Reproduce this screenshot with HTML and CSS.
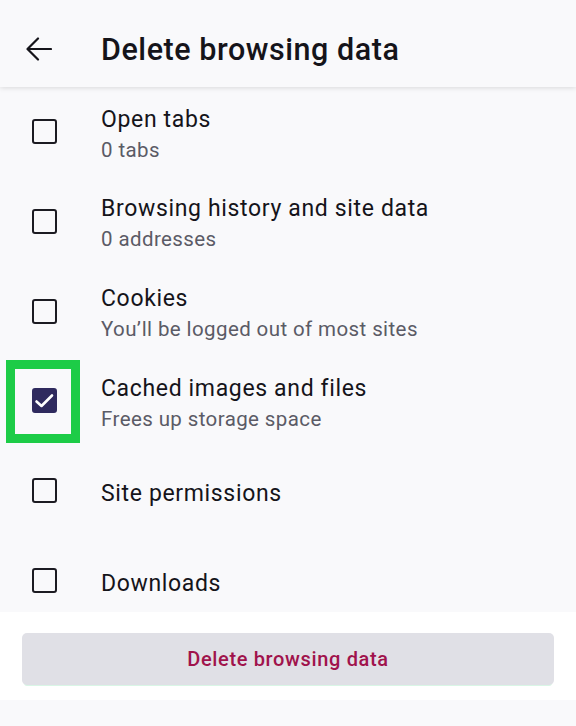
FILE: index.html
```html
<!DOCTYPE html>
<html lang="en">
<head>
<meta charset="utf-8">
<title>Delete browsing data</title>
<link rel="stylesheet" href="styles.css">
</head>
<body>
<div class="screen">
  <header class="appbar">
    <span class="back" aria-label="Back">
      <svg width="26" height="24" viewBox="0 0 26 24"><path d="M25 12H2M12 1.5 1.5 12 12 22.5" fill="none" stroke="#15141a" stroke-width="2.2" stroke-linecap="round" stroke-linejoin="round"/></svg>
    </span>
    <h1 class="title">Delete browsing data</h1>
  </header>
  <main class="list">
    <div class="row">
      <span class="box"></span>
      <div class="text"><div class="label">Open tabs</div><div class="sub">0 tabs</div></div>
    </div>
    <div class="row">
      <span class="box"></span>
      <div class="text"><div class="label">Browsing history and site data</div><div class="sub">0 addresses</div></div>
    </div>
    <div class="row">
      <span class="box"></span>
      <div class="text"><div class="label">Cookies</div><div class="sub">You’ll be logged out of most sites</div></div>
    </div>
    <div class="row">
      <span class="box checked">
        <svg width="21" height="20" viewBox="0 0 21 20"><path d="M2.5 10.5 7.5 15 18 4.5" fill="none" stroke="#fff" stroke-width="2.6" stroke-linecap="round" stroke-linejoin="round"/></svg>
        <span class="highlight"></span>
      </span>
      <div class="text"><div class="label">Cached images and files</div><div class="sub">Frees up storage space</div></div>
    </div>
    <div class="row">
      <span class="box"></span>
      <div class="text"><div class="label">Site permissions</div></div>
    </div>
    <div class="row">
      <span class="box"></span>
      <div class="text"><div class="label">Downloads</div></div>
    </div>
  </main>
  <footer class="footer">
    <button class="delete">Delete browsing data</button>
  </footer>
</div>
</body>
</html>
```
FILE: styles.css
```css
* { box-sizing: border-box; }
html, body { margin: 0; padding: 0; }
body {
  background: #f9f9fb;
  font-family: Roboto, "Noto Sans", "Liberation Sans", sans-serif;
  color: #15141a;
}
.screen {
  width: 576px;
  height: 726px;
  display: flex;
  flex-direction: column;
  overflow: hidden;
}
.appbar {
  height: 87px;
  flex: none;
  display: flex;
  align-items: center;
  padding-top: 12px;
  background: #f9f9fb;
  box-shadow: 0 1px 5px rgba(0,0,0,0.13);
  position: relative;
  z-index: 2;
}
.back {
  width: 26px;
  height: 24px;
  margin-left: 26px;
  margin-top: -1px;
  display: flex;
}
.title {
  margin: 0 0 0 49px;
  font-size: 30.5px;
  font-weight: 500;
  letter-spacing: 0.55px;
  color: #15141a;
}
.list {
  height: 525px;
  flex: none;
  overflow: hidden;
}
.row {
  height: 89.7px;
  display: flex;
  align-items: center;
  padding-left: 32px;
}
.box {
  width: 25px;
  height: 25px;
  flex: none;
  border: 2.6px solid #1c1b22;
  border-radius: 3px;
  position: relative;
  display: flex;
  align-items: center;
  justify-content: center;
}
.box.checked {
  background: #2f2a5e;
  border-color: #2f2a5e;
}
.highlight {
  position: absolute;
  left: -28px;
  top: -30px;
  width: 74px;
  height: 83px;
  border: 9.5px solid #1dcc47;
}
.text {
  margin-left: 44px;
  padding-top: 7px;
  display: flex;
  flex-direction: column;
}
.label {
  font-size: 23px;
  line-height: 30px;
  letter-spacing: 0.65px;
  color: #15141a;
}
.sub {
  font-size: 20.5px;
  line-height: 31.5px;
  letter-spacing: 0.4px;
  color: #5b5b66;
}
.footer {
  flex: none;
  background: #fff;
  padding: 21px 22px 15px 22px;
}
.delete {
  display: block;
  width: 532px;
  height: 52px;
  border: none;
  border-radius: 5px;
  background: #e0e0e6;
  color: #a0134c;
  font-family: Roboto, "Noto Sans", "Liberation Sans", sans-serif;
  font-size: 20px;
  font-weight: 500;
  letter-spacing: 0.65px;
  box-shadow: 0 3px 0 -2px #d9f6e6;
}
```
